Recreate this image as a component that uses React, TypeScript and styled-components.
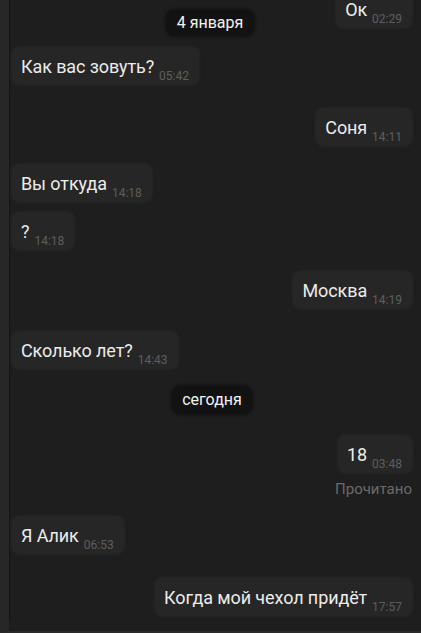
import styled, { createGlobalStyle } from 'styled-components';

const GlobalStyle = createGlobalStyle`
  html, body {
    margin: 0;
    padding: 0;
    background: #1e1e1e;
  }
  body {
    font-family: Roboto, "Noto Sans", "Liberation Sans", sans-serif;
  }
`;

type Msg =
  | { kind: 'msg'; out: boolean; text: string; time: string; gap: number }
  | { kind: 'date'; text: string; gap: number }
  | { kind: 'read'; text: string; gap: number };

const messages: Msg[] = [
  { kind: 'msg', out: true, text: 'Ок', time: '02:29', gap: 0 },
  { kind: 'msg', out: false, text: 'Как вас зовуть?', time: '05:42', gap: 19 },
  { kind: 'msg', out: true, text: 'Соня', time: '14:11', gap: 23 },
  { kind: 'msg', out: false, text: 'Вы откуда', time: '14:18', gap: 18 },
  { kind: 'msg', out: false, text: '?', time: '14:18', gap: 10 },
  { kind: 'msg', out: true, text: 'Москва', time: '14:19', gap: 21 },
  { kind: 'msg', out: false, text: 'Сколько лет?', time: '14:43', gap: 22 },
  { kind: 'date', text: 'сегодня', gap: 17 },
  { kind: 'msg', out: true, text: '18', time: '03:48', gap: 21 },
  { kind: 'read', text: 'Прочитано', gap: 7 },
  { kind: 'msg', out: false, text: 'Я Алик', time: '06:53', gap: 18 },
  { kind: 'msg', out: true, text: 'Когда мой чехол придёт', time: '17:57', gap: 24 },
];

const Screen = styled.div`
  position: relative;
  height: 100vh;
  box-sizing: border-box;
  overflow: hidden;
  background: #1e1e1e;
  border-left: 9px solid #272727;
  border-bottom: 2px solid #2a2a2a;
`;

const Chat = styled.div`
  height: 100%;
  border-left: 1px solid #151515;
  padding: 0 9px 0 2px;
  display: flex;
  flex-direction: column;
  margin-top: -10px;
`;

const Row = styled.div<{ $align: 'start' | 'center' | 'end'; $gap: number }>`
  display: flex;
  justify-content: ${(p) =>
    p.$align === 'end' ? 'flex-end' : p.$align === 'center' ? 'center' : 'flex-start'};
  margin-top: ${(p) => p.$gap}px;
`;

const Bubble = styled.div`
  display: flex;
  align-items: flex-end;
  gap: 5px;
  background: #262626;
  border-radius: 8px;
  box-shadow: 0 0 3px 1px #262626;
  padding: 9px 10px 8px 9px;
`;

const Text = styled.span`
  color: #ececec;
  font-size: 18px;
  line-height: 21px;
  letter-spacing: -0.1px;
`;

const Time = styled.span`
  color: #5e5e5e;
  font-size: 12px;
  line-height: 12px;
  margin-bottom: -5px;
`;

const DatePill = styled.div`
  background: #121212;
  color: #f2f2f2;
  font-size: 16px;
  line-height: 19px;
  padding: 4px 10px 5px;
  border-radius: 8px;
  box-shadow: 0 0 3px 1px #121212;
`;

const StickyDate = styled(DatePill)`
  position: absolute;
  top: 10px;
  left: 50%;
  transform: translateX(-50%);
  margin-left: -5px;
  padding: 3px 10px 4px;
`;

const ReadLabel = styled.div`
  color: #6a6a6a;
  font-size: 15px;
  line-height: 18px;
`;

const App = () => {
  return (
    <>
      <GlobalStyle />
      <Screen>
        <Chat>
          {messages.map((m, i) => {
            if (m.kind === 'date') {
              return (
                <Row key={i} $gap={m.gap} $align="center">
                  <DatePill>{m.text}</DatePill>
                </Row>
              );
            }
            if (m.kind === 'read') {
              return (
                <Row key={i} $gap={m.gap} $align="end">
                  <ReadLabel>{m.text}</ReadLabel>
                </Row>
              );
            }
            return (
              <Row key={i} $gap={m.gap} $align={m.out ? 'end' : 'start'}>
                <Bubble>
                  <Text>{m.text}</Text>
                  <Time>{m.time}</Time>
                </Bubble>
              </Row>
            );
          })}
        </Chat>
        <StickyDate>4 января</StickyDate>
      </Screen>
    </>
  );
};

export default App;
